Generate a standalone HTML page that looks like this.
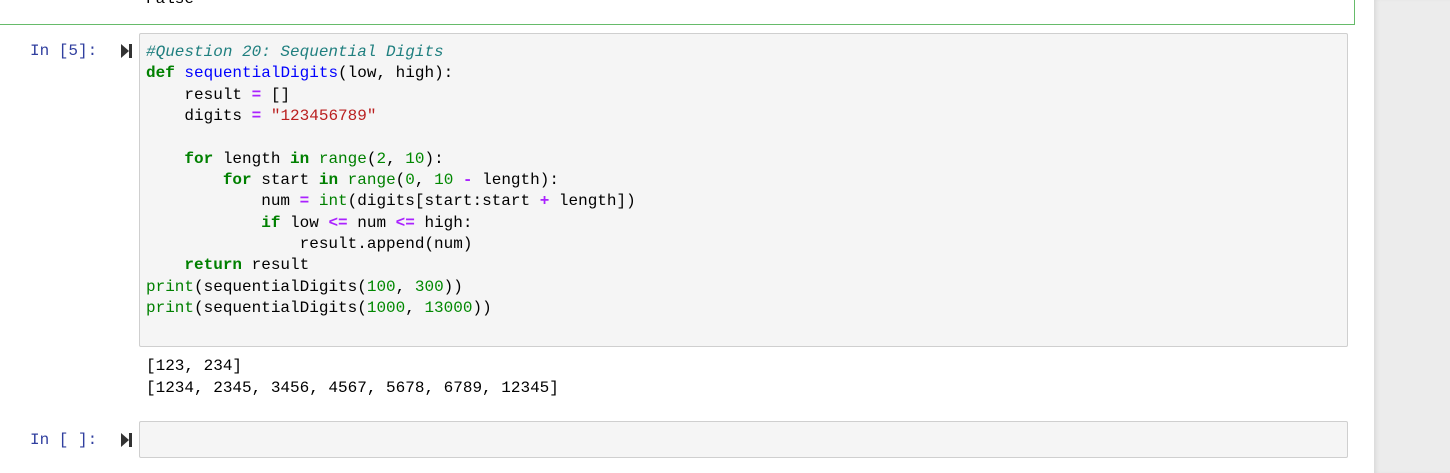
<!DOCTYPE html>
<html><head><style>
body{margin:0;width:1450px;height:473px;background:#fff;position:relative;overflow:hidden;font-family:"Liberation Mono",monospace;font-size:16px;}
.gray{position:absolute;left:1374px;top:0;width:76px;height:473px;background:#ececec;box-shadow:inset 4px 0 4px -2px #d8d8d8;}
.prev{position:absolute;left:-2px;top:-10px;width:1355px;height:34px;border:1px solid #66bb6a;border-top:none;}
.box{position:absolute;background:#f5f5f5;border:1px solid #cfcfcf;border-radius:2px;}
.l{position:absolute;white-space:pre;line-height:21.35px;}
.p{position:absolute;color:#303f9f;white-space:pre;font-size:16px;}
.k{color:#008000;font-weight:bold}.f{color:#0000ff}.c{color:#1f7f7f;font-style:italic}.s{color:#ba2121}.n{color:#008800}.o{color:#aa22ff;font-weight:bold}.b{color:#008000}
.run{position:absolute;width:0;height:0;border-top:7px solid transparent;border-bottom:7px solid transparent;border-left:8px solid #333;}
.run:after{content:"";position:absolute;left:0;top:-7px;width:3px;height:14px;background:#333;}
</style></head><body>
<div class="prev"></div>
<div class="l" style="left:146px;top:-11px;color:#000">False</div>
<div class="gray"></div>
<div class="p" style="left:30px;top:42px">In [5]:</div>
<div class="run" style="left:121px;top:44px"></div>
<div class="box" style="left:139px;top:33px;width:1207px;height:312px"></div>
<div class="l" style="left:146px;top:42px"><span class="c">#Question 20: Sequential Digits</span>
<span class="k">def</span> <span class="f">sequentialDigits</span>(low, high):
    result <span class="o">=</span> []
    digits <span class="o">=</span> <span class="s">"123456789"</span>

    <span class="k">for</span> length <span class="k">in</span> <span class="b">range</span>(<span class="n">2</span>, <span class="n">10</span>):
        <span class="k">for</span> start <span class="k">in</span> <span class="b">range</span>(<span class="n">0</span>, <span class="n">10</span> <span class="o">-</span> length):
            num <span class="o">=</span> <span class="b">int</span>(digits[start:start <span class="o">+</span> length])
            <span class="k">if</span> low <span class="o">&lt;=</span> num <span class="o">&lt;=</span> high:
                result<span>.</span>append(num)
    <span class="k">return</span> result
<span class="b">print</span>(sequentialDigits(<span class="n">100</span>, <span class="n">300</span>))
<span class="b">print</span>(sequentialDigits(<span class="n">1000</span>, <span class="n">13000</span>))</div>
<div class="l" style="left:146px;top:355px;line-height:22px">[123, 234]
[1234, 2345, 3456, 4567, 5678, 6789, 12345]</div>
<div class="p" style="left:30px;top:431px">In [ ]:</div>
<div class="run" style="left:121px;top:433px"></div>
<div class="box" style="left:139px;top:421px;width:1207px;height:35px"></div>
</body></html>
